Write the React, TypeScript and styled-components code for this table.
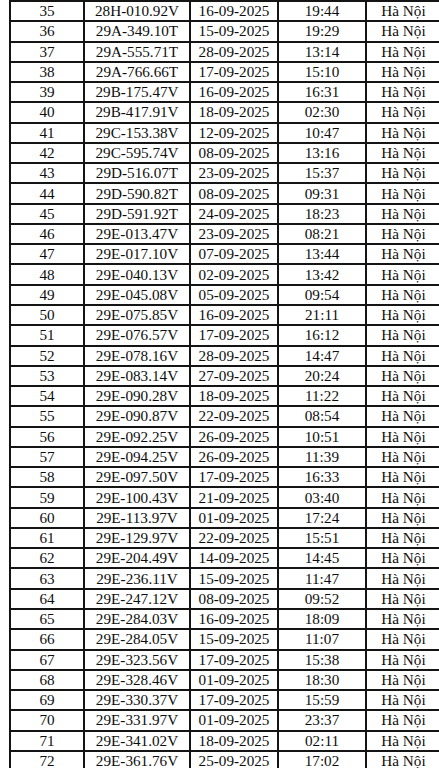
import React from "react";
import styled, { createGlobalStyle } from "styled-components";

const GlobalStyle = createGlobalStyle`
  html, body {
    margin: 0;
    padding: 0;
    background: #ffffff;
    overflow: hidden;
  }
`;

type Row = [number, string, string, string];

const rows: Row[] = [
  [35, "28H-010.92V", "16-09-2025", "19:44"],
  [36, "29A-349.10T", "15-09-2025", "19:29"],
  [37, "29A-555.71T", "28-09-2025", "13:14"],
  [38, "29A-766.66T", "17-09-2025", "15:10"],
  [39, "29B-175.47V", "16-09-2025", "16:31"],
  [40, "29B-417.91V", "18-09-2025", "02:30"],
  [41, "29C-153.38V", "12-09-2025", "10:47"],
  [42, "29C-595.74V", "08-09-2025", "13:16"],
  [43, "29D-516.07T", "23-09-2025", "15:37"],
  [44, "29D-590.82T", "08-09-2025", "09:31"],
  [45, "29D-591.92T", "24-09-2025", "18:23"],
  [46, "29E-013.47V", "23-09-2025", "08:21"],
  [47, "29E-017.10V", "07-09-2025", "13:44"],
  [48, "29E-040.13V", "02-09-2025", "13:42"],
  [49, "29E-045.08V", "05-09-2025", "09:54"],
  [50, "29E-075.85V", "16-09-2025", "21:11"],
  [51, "29E-076.57V", "17-09-2025", "16:12"],
  [52, "29E-078.16V", "28-09-2025", "14:47"],
  [53, "29E-083.14V", "27-09-2025", "20:24"],
  [54, "29E-090.28V", "18-09-2025", "11:22"],
  [55, "29E-090.87V", "22-09-2025", "08:54"],
  [56, "29E-092.25V", "26-09-2025", "10:51"],
  [57, "29E-094.25V", "26-09-2025", "11:39"],
  [58, "29E-097.50V", "17-09-2025", "16:33"],
  [59, "29E-100.43V", "21-09-2025", "03:40"],
  [60, "29E-113.97V", "01-09-2025", "17:24"],
  [61, "29E-129.97V", "22-09-2025", "15:51"],
  [62, "29E-204.49V", "14-09-2025", "14:45"],
  [63, "29E-236.11V", "15-09-2025", "11:47"],
  [64, "29E-247.12V", "08-09-2025", "09:52"],
  [65, "29E-284.03V", "16-09-2025", "18:09"],
  [66, "29E-284.05V", "15-09-2025", "11:07"],
  [67, "29E-323.56V", "17-09-2025", "15:38"],
  [68, "29E-328.46V", "01-09-2025", "18:30"],
  [69, "29E-330.37V", "17-09-2025", "15:59"],
  [70, "29E-331.97V", "01-09-2025", "23:37"],
  [71, "29E-341.02V", "18-09-2025", "02:11"],
  [72, "29E-361.76V", "25-09-2025", "17:02"],
];

const Page = styled.div`
  width: 439px;
  height: 768px;
  overflow: hidden;
  padding-left: 9px;
  box-sizing: border-box;
`;

const Table = styled.table`
  border-collapse: collapse;
  table-layout: fixed;
  width: 431px;
  font-family: "Liberation Serif", "Times New Roman", serif;
  font-size: 15.2px;
  color: #0d0d0d;
`;

const Cell = styled.td`
  border: 2px solid #141414;
  height: 20.27px;
  padding: 0;
  text-align: center;
  line-height: 16px;
  white-space: nowrap;
  box-sizing: border-box;
`;

const widths = [74, 106, 88, 88, 75];

export default function App() {
  return (
    <Page>
      <GlobalStyle />
      <Table>
        <colgroup>
          {widths.map((w, i) => (
            <col key={i} style={{ width: w }} />
          ))}
        </colgroup>
        <tbody>
          {rows.map(([n, plate, date, time]) => (
            <tr key={n}>
              <Cell>{n}</Cell>
              <Cell>{plate}</Cell>
              <Cell>{date}</Cell>
              <Cell>{time}</Cell>
              <Cell>Hà Nội</Cell>
            </tr>
          ))}
        </tbody>
      </Table>
    </Page>
  );
}
